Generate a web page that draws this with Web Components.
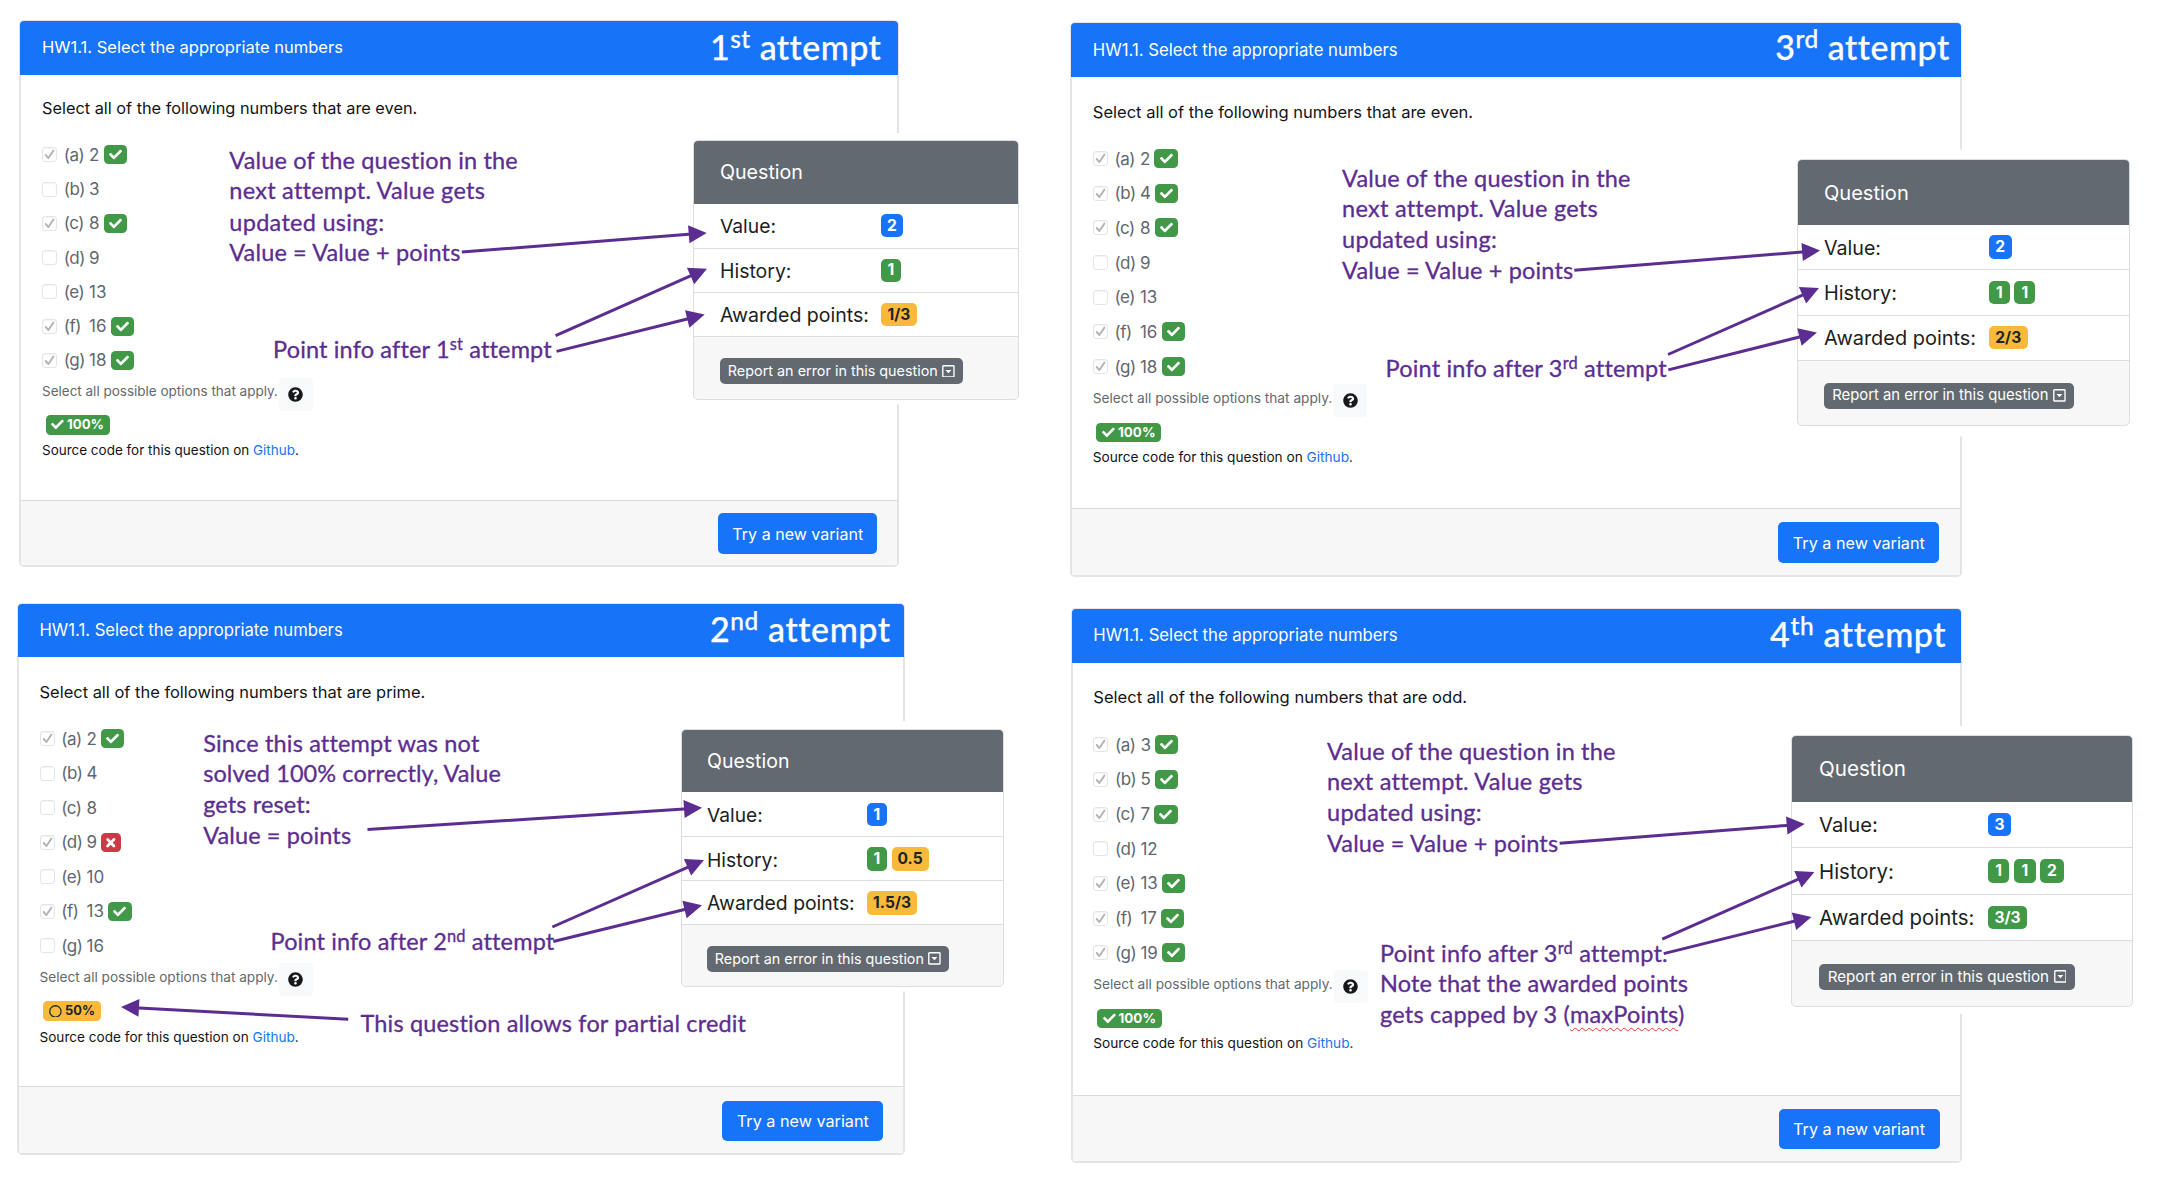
<!DOCTYPE html>
<html lang="en">
<head>
<meta charset="utf-8">
<title>Attempts overview</title>
<style>
html,body{margin:0;background:#fff}
body{width:2164px;height:1196px;overflow:hidden;font-family:Inter,"Liberation Sans",sans-serif;color:#212529}
</style>
</head>
<body>
<attempt-board></attempt-board>
<script>
const ICONS = {
  check: '<svg viewBox="0 0 512 512" fill="currentColor"><path d="M173.9 439.4 7.5 273c-10-10-10-26.200 0-36.200l36.200-36.200c10-10 26.200-10 36.200 0L192 312.700 432.100 72.600c10-10 26.200-10 36.200 0l36.200 36.200c10 10 10 26.200 0 36.200L210.100 439.400c-10 10-26.200 10-36.200 0z"/></svg>',
  cross: '<svg viewBox="0 0 12 12" fill="none" stroke="currentColor" stroke-width="2.900" stroke-linecap="round"><path d="M2.700 2.700 9.300 9.300M9.300 2.700 2.700 9.300"/></svg>',
  ring: '<svg viewBox="0 0 12 12" fill="none" stroke="currentColor" stroke-width="1.200"><circle cx="6" cy="6" r="5.300"/></svg>',
  help: '<svg viewBox="0 0 512 512" fill="currentColor"><path d="M504 256c0 137-111 248-248 248S8 393 8 256C8 119.100 119 8 256 8s248 111.100 248 248zM262.700 90c-54.500 0-89.300 23-116.600 63.800-3.500 5.300-2.400 12.400 2.700 16.200l34.700 26.300c5.200 4 12.600 3 16.700-2.100 17.900-22.700 30.100-35.800 57.300-35.800 20.400 0 45.700 13.100 45.700 33 0 15-12.400 22.600-32.500 33.900C247.100 238.500 216 254.900 216 296v4c0 6.600 5.400 12 12 12h56c6.600 0 12-5.400 12-12v-1.300c0-28.500 83.200-29.700 83.200-106.700 0-58-60.200-102-116.500-102zM256 338c-25.400 0-46 20.600-46 46s20.600 46 46 46 46-20.600 46-46-20.600-46-46-46z"/></svg>',
  caret: '<svg viewBox="0 0 13 13"><rect x=".8" y=".8" width="11.400" height="11.400" rx=".6" fill="none" stroke="currentColor" stroke-width="1.400"/><path d="M3.500 5h6L6.500 8.300z" fill="currentColor"/></svg>'
};

/* Text run set to an exact width: by="size" scales the glyphs, by="space" the tracking. */
class FitText extends HTMLElement {
  connectedCallback() {
    const root = this.attachShadow({mode: 'open'});
    root.innerHTML = '<style>:host{display:inline-block;white-space:pre;flex:none}span{display:inline-block}</style><span><slot></slot></span>';
    const w = +this.getAttribute('w');
    if (!w) return;
    const natural = root.querySelector('span').getBoundingClientRect().width;
    if (this.getAttribute('by') === 'space')
      this.style.letterSpacing = (w - natural) / this.textContent.length + 'px';
    else
      this.style.fontSize = parseFloat(getComputedStyle(this).fontSize) * w / natural + 'px';
  }
}
customElements.define('fit-text', FitText);

/* Coloured result chip */
class ScoreBadge extends HTMLElement {
  connectedCallback() {
    const icon = this.getAttribute('icon');
    this.attachShadow({mode: 'open'}).innerHTML = `<style>
      :host{display:inline-flex;align-items:center;justify-content:center;box-sizing:border-box;border-radius:4.500px;
        color:#fff;background:#419846;font-weight:700;line-height:1;flex:none;white-space:nowrap}
      :host([tone=blue]){background:#1773f8}
      :host([tone=red]){background:#cb3a45}
      :host([tone=amber]){background:#f9ba3b;color:#212529}
      svg{display:block;width:var(--icon,13px);height:var(--icon,13px);margin-right:var(--icon-gap,0)}
    </style>${icon ? ICONS[icon] : ''}<slot></slot>`;
  }
}
customElements.define('score-badge', ScoreBadge);

class OptionRow extends HTMLElement {
  connectedCallback() {
    const a = n => this.getAttribute(n), mark = a('mark');
    this.attachShadow({mode: 'open'}).innerHTML = `<style>
      :host{display:flex;align-items:center;font-size:17px;color:#5f676e;line-height:1;box-sizing:border-box}
      i{width:15px;height:15px;box-sizing:border-box;border:1px solid #e4e5e5;border-radius:3px;background:#fff;margin-right:6.800px;display:flex;align-items:center;justify-content:center;color:#b4b5b6;box-shadow:inset 0 1px 1px #f4f4f4}
      i svg{width:11px;height:11px;fill:none;stroke:currentColor;stroke-width:1.900;stroke-linecap:round;stroke-linejoin:round}
      b{font-weight:400;width:25.300px;flex:none;letter-spacing:-.5px}
      b,span{padding-top:1px}
      score-badge{margin-left:4.200px;width:23.300px;height:19px;font-size:12px}
      score-badge[tone=red]{width:19.300px;--icon:11.500px}
    </style><i>${a('checked') !== null ? '<svg viewBox="0 0 11 11"><path d="M1.700 6 4.400 9 9.400 1.600"/></svg>' : ''}</i>
    <b>(${a('key')})</b><span>${a('value')}</span>${mark ? `<score-badge ${mark === 'bad' ? 'tone="red" icon="cross"' : 'icon="check"'}></score-badge>` : ''}`;
  }
}
customElements.define('option-row', OptionRow);

class QuestionCard extends HTMLElement {
  set data(d) {
    const last = d.row1 + 6 * d.pitch, end = last + d.pitch / 2;
    this.attachShadow({mode: 'open'}).innerHTML = `<style>
      :host{display:flex;flex-direction:column;box-sizing:border-box;border:2px solid #e3e4e5;border-radius:5px;background:#fff;
        width:${d.w}px;height:${d.h}px;margin:${d.mt}px 0 0 ${d.ml}px}
      header{flex:none;height:${d.head}px;margin:-1px -1px 0;border-radius:4px 4px 0 0;background:#1773f8;color:#fff;display:flex;align-items:center;justify-content:space-between;
        padding:0 ${d.headPad}px 0 ${d.pad - 1}px;box-sizing:border-box;font-size:17px;line-height:1}
      header > fit-text{padding-bottom:${d.titleLift || 0}px}
      h2{margin:0 0 ${d.lift}px;font:500 34px/1 Lato,sans-serif;-webkit-text-stroke:.25px #fff}
      sup{font-size:.72em;line-height:0;vertical-align:.48em}
      main{flex:1;display:flex;flex-direction:column;align-items:flex-start;padding-left:${d.pad - 2}px;min-height:0}
      .line{height:30px;display:flex;align-items:center;font-size:17px;line-height:1;flex:none}
      .prompt{margin-top:${d.prompt - 15 - d.head - 1}px;color:#111418}
      .options{margin-top:${d.row1 + .4 - d.pitch / 2 - d.prompt - 15}px}
      option-row{height:${d.pitch}px}
      .hint{height:28px;margin-top:${d.select - 14 - end}px;color:#62696f;font-size:13.500px}
      .help{width:34px;height:33px;border-radius:4px;background:#f8f9fb;display:flex;align-items:center;justify-content:center;margin:4px 0 0 .8px;color:#16181b}
      .help svg{width:15px;height:15px}
      .grade{height:20px;margin:${d.badge - 10 - d.select - 14}px 0 0 3.600px}
      .grade score-badge{height:19.300px;width:${d.badgeW}px;font-size:13px;--icon:12.800px;--icon-gap:3px}
      .source{height:20px;margin-top:${d.source - 10 - d.badge - 10}px;font-size:13.500px;color:#111418}
      a{color:#1773f8;text-decoration:none}
      footer{flex:none;height:${d.h - d.foot - 2}px;border-top:1.500px solid #d9dadb;background:#f7f7f7;display:flex;align-items:center;justify-content:flex-end;padding-right:${d.btnPad || 20}px;box-sizing:border-box}
      button{all:unset;box-sizing:border-box;width:${d.btn}px;height:40.600px;padding-top:1px;margin-top:1px;border-radius:5px;background:#1773f8;color:#fff;display:flex;align-items:center;justify-content:center;font-size:17px;line-height:1}
    </style>
    <header><fit-text w="${d.titleW}">HW1.1. Select the appropriate numbers</fit-text><h2><fit-text by="space" w="${d.attemptW}">${d.ord[0]}<sup>${d.ord[1]}</sup> attempt</fit-text></h2></header>
    <main>
      <div class="line prompt"><fit-text w="${d.promptW}">Select all of the following numbers that are ${d.kind}.</fit-text></div>
      <div class="options">${d.options.map((o, i) => `<option-row key="${'abcdefg'[i]}" value="${o[0]}" ${o[1] ? `checked mark="${o[1]}"` : ''}></option-row>`).join('')}</div>
      <div class="line hint"><fit-text w="${d.hintW}">Select all possible options that apply.</fit-text><span class="help">${ICONS.help}</span></div>
      <div class="line grade"><score-badge icon="${d.grade === '50%' ? 'ring' : 'check'}" ${d.grade === '50%' ? 'tone="amber"' : ''}>${`<fit-text w="${d.gradeW}">${d.grade}</fit-text>`}</score-badge></div>
      <div class="line source"><fit-text w="${d.sourceW}">Source code for this question on <a>Github</a>.</fit-text></div>
    </main>
    <footer><button><fit-text w="${d.btnText}">Try a new variant</fit-text></button></footer>`;
  }
}
customElements.define('question-card', QuestionCard);

/* Score panel floating over its card */
class ScorePanel extends HTMLElement {
  set data(p) {
    const row = (label, w, h, badges) => `<div class="row" style="height:${h}px"><span class="label"><fit-text w="${w}">${label}</fit-text></span>${badges.map(b => `<score-badge tone="${b[1]}" style="width:${b[2]}px">${b[0]}</score-badge>`).join('')}</div>`;
    this.attachShadow({mode: 'open'}).innerHTML = `<style>
      :host{position:absolute;left:${p.x}px;top:${p.y}px;width:${p.w}px;height:${p.h}px;box-sizing:border-box;display:flex;flex-direction:column;
        background:#f7f7f7;border:1.500px solid #dcdddf;border-radius:5px;box-shadow:0 -${p.halo[0]}px 0 #fff,0 ${p.halo[1]}px 0 #fff;font-size:20px;line-height:1}
      header{height:${p.head - 1}px;border-radius:4px 4px 0 0;background:#626970;color:#fff;display:flex;align-items:center;padding:1px 0 0 ${p.pad}px;flex:none;box-sizing:border-box}
      .row{display:flex;align-items:center;gap:4.600px;padding-left:${p.pad}px;background:#fff;border-bottom:1px solid #dcdddf;box-sizing:border-box;flex:none;color:#1b1e21}
      .label{width:${p.col - 4.6}px;flex:none;padding-top:1.500px}
      .row score-badge{height:23.400px;font-size:15.600px;border-radius:5px}
      footer{flex:1;display:flex;align-items:center;padding:${p.footTop}px 0 0 ${p.pad}px}
      button{all:unset;box-sizing:border-box;width:${p.rep[0]}px;height:26px;border-radius:5px;background:#626970;color:#fff;display:flex;align-items:center;justify-content:center;gap:4.500px;font-size:14px;line-height:1}
      button svg{width:12.800px;height:12.800px}
    </style>
    <header><fit-text w="${p.tw[0]}">Question</fit-text></header>
    ${row('Value:', p.tw[1], p.rows[0], p.value)}
    ${row('History:', p.tw[2], p.rows[1], p.history)}
    ${row('Awarded points:', p.tw[3], p.rows[2], p.awarded)}
    <footer><button><fit-text w="${p.rep[1]}">Report an error in this question</fit-text>${ICONS.caret}</button></footer>`;
  }
}
customElements.define('score-panel', ScorePanel);

/* Hand-placed annotation; each line is [text, width] */
class SlideNote extends HTMLElement {
  set data(n) {
    this.attachShadow({mode: 'open'}).innerHTML = `<style>
      :host{position:absolute;left:${n.x}px;top:${n.base - 24}px;font:400 23.500px/30px Lato,sans-serif;color:#5c2d91;-webkit-text-stroke:.3px #5c2d91}
      div{height:30px;white-space:nowrap}
      div.low{padding-top:1.700px;height:30.300px}
      sup{font-size:.7em;line-height:0;vertical-align:.49em}
      u{text-decoration:underline wavy #e5392d 1.300px;text-underline-offset:4px;text-decoration-skip-ink:none}
    </style>${n.lines.map((l, i) => `<div class="${i === 2 ? 'low' : ''}"><fit-text by="space" w="${l[1]}">${l[0]}</fit-text></div>`).join('')}`;
  }
}
customElements.define('slide-note', SlideNote);

class ArrowLayer extends HTMLElement {
  set data(list) {
    this.attachShadow({mode: 'open'}).innerHTML = `<style>:host{position:absolute;inset:0;pointer-events:none}svg{display:block}</style>
    <svg width="2164" height="1196" fill="#5c2d91" stroke="none">${list.map(([x1, y1, x2, y2]) => {
      const len = Math.hypot(x2 - x1, y2 - y1), deg = Math.atan2(y2 - y1, x2 - x1) * 180 / Math.PI;
      return `<path transform="translate(${x1} ${y1}) rotate(${deg})" d="M0-1.500H${len - 18}V-9L${len} 0 ${len - 18} 9V1.500H0z"/>`;
    }).join('')}</svg>`;
  }
}
customElements.define('arrow-layer', ArrowLayer);

const ok = 'ok', V = ['Value of the question in the', 'next attempt. Value gets', 'updated using:', 'Value = Value + points'];
const valueNote = (x, base) => ({x, base, lines: [[V[0], 289], [V[1], 255], [V[2], 155], [V[3], 231.2]]});
const cards = [
  {ml:19, mt:20, w:880.3, h:547, head:54, pad:23, headPad:17, lift:2.5, titleLift:1.5, prompt:88.3, row1:134.5, pitch:34.25, select:371.8, badge:404.5, source:430, foot:479.5,
   titleW:301, attemptW:170, ord:['1','st'], promptW:375.7, kind:'even', hintW:236, badgeW:64, gradeW:37, sourceW:257, btn:159, btnText:131, grade:'100%',
   options:[[2,ok],[3],[8,ok],[9],[13],[16,ok],[18,ok]]},
  {ml:20, mt:22, w:892.3, h:555, head:54, pad:22.8, headPad:11.5, lift:6, prompt:89.8, row1:136.3, pitch:34.65, select:376.3, badge:410, source:436, foot:486,
   titleW:305, attemptW:173.3, ord:['3','rd'], promptW:380.7, kind:'even', hintW:239.5, badgeW:65, gradeW:37.5, sourceW:260.5, btn:161, btnText:132, btnPad:21, grade:'100%',
   options:[[2,ok],[4,ok],[8,ok],[9],[13],[16,ok],[18,ok]]},
  {ml:17, mt:603, w:888.3, h:552.3, head:53, pad:22.5, headPad:13.6, lift:2.5, prompt:88.8, row1:135.5, pitch:34.5, select:374.3, badge:407.7, source:434, foot:483.3,
   titleW:303.5, attemptW:179.5, ord:['2','nd'], promptW:386, kind:'prime', hintW:238.5, badgeW:58, gradeW:30, sourceW:259.5, btn:161, btnText:132, grade:'50%',
   options:[[2,ok],[4],[8],[9,'bad'],[10],[13,ok],[16]]},
  {ml:20.5, mt:607.5, w:891.8, h:555.8, head:54, pad:22.8, headPad:15, lift:3, prompt:89.8, row1:136.7, pitch:34.73, select:376.7, badge:410.5, source:436.5, foot:487.1,
   titleW:304.5, attemptW:175, ord:['4','th'], promptW:374, kind:'odd', hintW:239.5, badgeW:65, gradeW:37.5, sourceW:260.5, btn:161, btnText:132, btnPad:20.8, grade:'100%',
   options:[[3,ok],[5,ok],[7,ok],[12],[13,ok],[17,ok],[19,ok]]}
];
const panels = [
  {x:693.3, y:140, w:325.3, h:260, halo:[7,4.5], head:63.7, pad:25.7, col:161, rows:[45,44.2,44.2], tw:[83,56,71.5,149], footTop:6, rep:[243,210.3],
   value:[['2','blue',22]], history:[['1','green',20]], awarded:[['1/3','amber',36]]},
  {x:681, y:729.3, w:322.7, h:258, halo:[8,4.5], head:63, pad:25, col:160, rows:[45.2,43.9,44], tw:[82.5,55.7,71,147.7], footTop:6, rep:[242,209.3],
   value:[['1','blue',20]], history:[['1','green',20],['0.5','amber',37]], awarded:[['1.5/3','amber',50.2]]},
  {x:1796.5, y:158.5, w:333.5, h:267.3, halo:[9.5,10.5], head:66.3, pad:26.5, col:164.8, rows:[45.7,45.2,45.2], tw:[84.8,57,73,152.2], footTop:6, rep:[250,216.5],
   value:[['2','blue',23]], history:[['1','green',21],['1','green',21]], awarded:[['2/3','amber',39]]},
  {x:1791, y:734.8, w:341.7, h:272, halo:[9,7], head:67.2, pad:27, col:168.8, rows:[46.5,46.3,46.5], tw:[87,58.8,75,155.4], footTop:6, rep:[256,221.5],
   value:[['3','blue',23.4]], history:[['1','green',21.6],['1','green',21.6],['2','green',23.4]], awarded:[['3/3','green',39.6]]}
];
const notes = [
  valueNote(229.3, 169.3), valueNote(1342.1, 186.8), valueNote(1327, 759.8),
  {x:203.2, base:751.8, lines:[['Since this attempt was not', 275.5], ['solved 100% correctly, Value', 297.7], ['gets reset:', 107.5], ['Value = points', 148]]},
  {x:273, base:358.4, lines:[['Point info after 1<sup>st</sup> attempt', 277.5]]},
  {x:270.5, base:949.6, lines:[['Point info after 2<sup>nd</sup> attempt', 282.5]]},
  {x:1385.5, base:377.3, lines:[['Point info after 3<sup>rd</sup> attempt', 280]]},
  {x:360.5, base:1032.4, lines:[['This question allows for partial credit', 386.5]]},
  {x:1380, base:961.7, lines:[['Point info after 3<sup>rd</sup> attempt.', 286.5], ['Note that the awarded points', 308], ['gets capped by 3 (<u>maxPoints</u>)', 304.5]]}
];
const arrows = [
  [461.8,252.1,706.7,232.9],[555.6,335.6,707,268.7],[556.6,351.4,704.7,314.6],
  [367.5,829.6,702,807.8],[552.3,927,704,860],[553.3,941.5,702,905.3],[348.2,1019.3,121,1006.9],
  [1574.3,270.2,1820.1,250.6],[1668,354.5,1819,287.9],[1668.3,369.9,1816.9,332.6],
  [1559.6,843.3,1804.7,824],[1662.2,939.2,1814.4,872],[1663.7,953.6,1811.5,917]
];

class AttemptBoard extends HTMLElement {
  connectedCallback() {
    const root = this.attachShadow({mode: 'open'});
    root.innerHTML = `<style>
      :host{display:block;position:relative;width:2164px;height:1196px}
      .grid{display:grid;grid-template-columns:1050px 1114px;grid-template-rows:590px 606px;align-items:start}
    </style><div class="grid"></div>`;
    const add = (parent, tag, data) => { const el = document.createElement(tag); parent.append(el); el.data = data; };
    const grid = root.querySelector('.grid');
    cards.forEach((c, i) => add(grid, 'question-card', i > 1 ? {...c, mt: c.mt - 590} : c));
    panels.forEach(p => add(root, 'score-panel', p));
    notes.forEach(n => add(root, 'slide-note', n));
    add(root, 'arrow-layer', arrows);
  }
}
customElements.define('attempt-board', AttemptBoard);
</script>
</body>
</html>
